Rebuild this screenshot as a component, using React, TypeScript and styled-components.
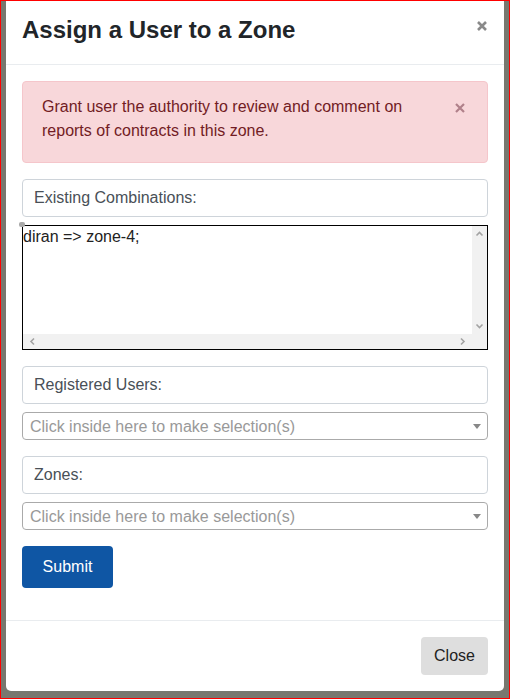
import React from "react";
import styled, { createGlobalStyle } from "styled-components";

const GlobalStyle = createGlobalStyle`
  html, body {
    margin: 0;
    padding: 0;
  }
  body {
    font-family: "Liberation Sans", Arial, sans-serif;
    font-size: 16px;
    color: #212529;
  }
  * {
    box-sizing: border-box;
  }
`;

const Backdrop = styled.div`
  height: 699px;
  border: 1px solid #ff0000;
  background: #78786f;
  padding: 0 5px;
`;

const Modal = styled.div`
  background: #fff;
  border-radius: 0 0 5px 5px;
  display: flex;
  flex-direction: column;
`;

const Header = styled.div`
  display: flex;
  justify-content: space-between;
  align-items: flex-start;
  height: 64px;
  padding: 14px 17px 0 16px;
  border-bottom: 1px solid #e9ecef;
`;

const Title = styled.h4`
  margin: 0;
  font-size: 24px;
  line-height: 29px;
  font-weight: 700;
  color: #212529;
`;

const CloseX = styled.button<{ $size: number; $color: string }>`
  border: none;
  background: none;
  padding: 0;
  width: ${(p) => p.$size}px;
  height: ${(p) => p.$size}px;
  color: ${(p) => p.$color};
  cursor: pointer;
  display: block;
  svg {
    display: block;
    width: 100%;
    height: 100%;
  }
`;

const HeaderClose = styled(CloseX)`
  margin-top: 6px;
`;

const Body = styled.div`
  padding: 16px 16px 32px;
  display: flex;
  flex-direction: column;
`;

const Alert = styled.div`
  position: relative;
  background: #f8d7da;
  border: 1px solid #f5c6cb;
  border-radius: 4px;
  color: #721c24;
  line-height: 24px;
  padding: 13px 48px 19px 19px;
  margin-bottom: 16px;
`;

const AlertClose = styled(CloseX)`
  position: absolute;
  top: 21px;
  right: 22px;
`;

const LabelBox = styled.div`
  border: 1px solid #ced4da;
  border-radius: 4px;
  padding: 6px 11px;
  line-height: 24px;
  color: #495057;
  margin-bottom: 8px;
`;

const ScrollBox = styled.div`
  position: relative;
  height: 125px;
  border: 1px solid #000;
  display: grid;
  grid-template-columns: 1fr 15px;
  grid-template-rows: 1fr 15px;
  margin-bottom: 16px;
  &::before {
    content: "";
    position: absolute;
    left: -4px;
    top: -4px;
    width: 6px;
    height: 5px;
    border-radius: 2px;
    background: #a9a9a9;
  }
`;

const Combos = styled.textarea`
  border: none;
  outline: none;
  resize: none;
  overflow: hidden;
  padding: 2px 0 0;
  margin: 0;
  font-family: "Liberation Sans", Arial, sans-serif;
  font-size: 16px;
  line-height: 18px;
  color: #222;
  background: #fff;
`;

const Track = styled.div<{ $vertical?: boolean }>`
  background: #f1f1f1;
  display: flex;
  flex-direction: ${(p) => (p.$vertical ? "column" : "row")};
  justify-content: space-between;
  align-items: center;
  padding: ${(p) => (p.$vertical ? "3px 0" : "0 5px")};
  color: #a3a3a3;
  svg {
    display: block;
    width: 9px;
    height: 9px;
  }
`;

const Corner = styled.div`
  background: #f1f1f1;
`;

const Select = styled.div`
  position: relative;
  height: 28px;
  border: 1px solid #aaa;
  border-radius: 4px;
  padding: 0 7px;
  line-height: 28px;
  color: #999;
  margin-bottom: 16px;
  &::after {
    content: "";
    position: absolute;
    right: 6px;
    top: 11px;
    border-top: 5px solid #888;
    border-left: 4px solid transparent;
    border-right: 4px solid transparent;
  }
`;

const Button = styled.button<{ $variant: "primary" | "secondary" }>`
  font-family: "Liberation Sans", Arial, sans-serif;
  font-size: 16px;
  line-height: 24px;
  border: none;
  border-radius: 4px;
  cursor: pointer;
  background: ${(p) => (p.$variant === "primary" ? "#0f56a4" : "#dedede")};
  color: ${(p) => (p.$variant === "primary" ? "#fff" : "#222")};
`;

const SubmitButton = styled(Button)`
  align-self: flex-start;
  width: 91px;
  height: 42px;
  padding: 0;
`;

const Footer = styled.div`
  display: flex;
  justify-content: flex-end;
  border-top: 1px solid #e9ecef;
  padding: 16px;
`;

const CloseButton = styled(Button)`
  width: 67px;
  height: 38px;
  padding: 0;
`;

const Cross = ({ weight }: { weight: number }) => (
  <svg viewBox="0 0 10 10">
    <path
      d="M1 1L9 9M9 1L1 9"
      stroke="currentColor"
      strokeWidth={weight}
      strokeLinecap="butt"
    />
  </svg>
);

const Chevron = ({ dir }: { dir: "up" | "down" | "left" | "right" }) => {
  const d = {
    up: "M1.5 6.5L4.5 3.5L7.5 6.5",
    down: "M1.5 2.5L4.5 5.5L7.5 2.5",
    left: "M6 1.5L3 4.5L6 7.5",
    right: "M3 1.5L6 4.5L3 7.5",
  }[dir];
  return (
    <svg viewBox="0 0 9 9">
      <path d={d} fill="none" stroke="currentColor" strokeWidth={1.6} />
    </svg>
  );
};

const placeholder = "Click inside here to make selection(s)";

export default function App() {
  return (
    <>
      <GlobalStyle />
      <Backdrop>
        <Modal>
          <Header>
            <Title>Assign a User to a Zone</Title>
            <HeaderClose $size={10} $color="#8a8a8a" aria-label="Close">
              <Cross weight={2.6} />
            </HeaderClose>
          </Header>
          <Body>
            <Alert>
              Grant user the authority to review and comment on reports of
              contracts in this zone.
              <AlertClose $size={10} $color="#b0808a" aria-label="Dismiss">
                <Cross weight={2.2} />
              </AlertClose>
            </Alert>
            <LabelBox>Existing Combinations:</LabelBox>
            <ScrollBox>
              <Combos readOnly defaultValue="diran => zone-4;" />
              <Track $vertical>
                <Chevron dir="up" />
                <Chevron dir="down" />
              </Track>
              <Track>
                <Chevron dir="left" />
                <Chevron dir="right" />
              </Track>
              <Corner />
            </ScrollBox>
            <LabelBox>Registered Users:</LabelBox>
            <Select>{placeholder}</Select>
            <LabelBox>Zones:</LabelBox>
            <Select>{placeholder}</Select>
            <SubmitButton $variant="primary">Submit</SubmitButton>
          </Body>
          <Footer>
            <CloseButton $variant="secondary">Close</CloseButton>
          </Footer>
        </Modal>
      </Backdrop>
    </>
  );
}
